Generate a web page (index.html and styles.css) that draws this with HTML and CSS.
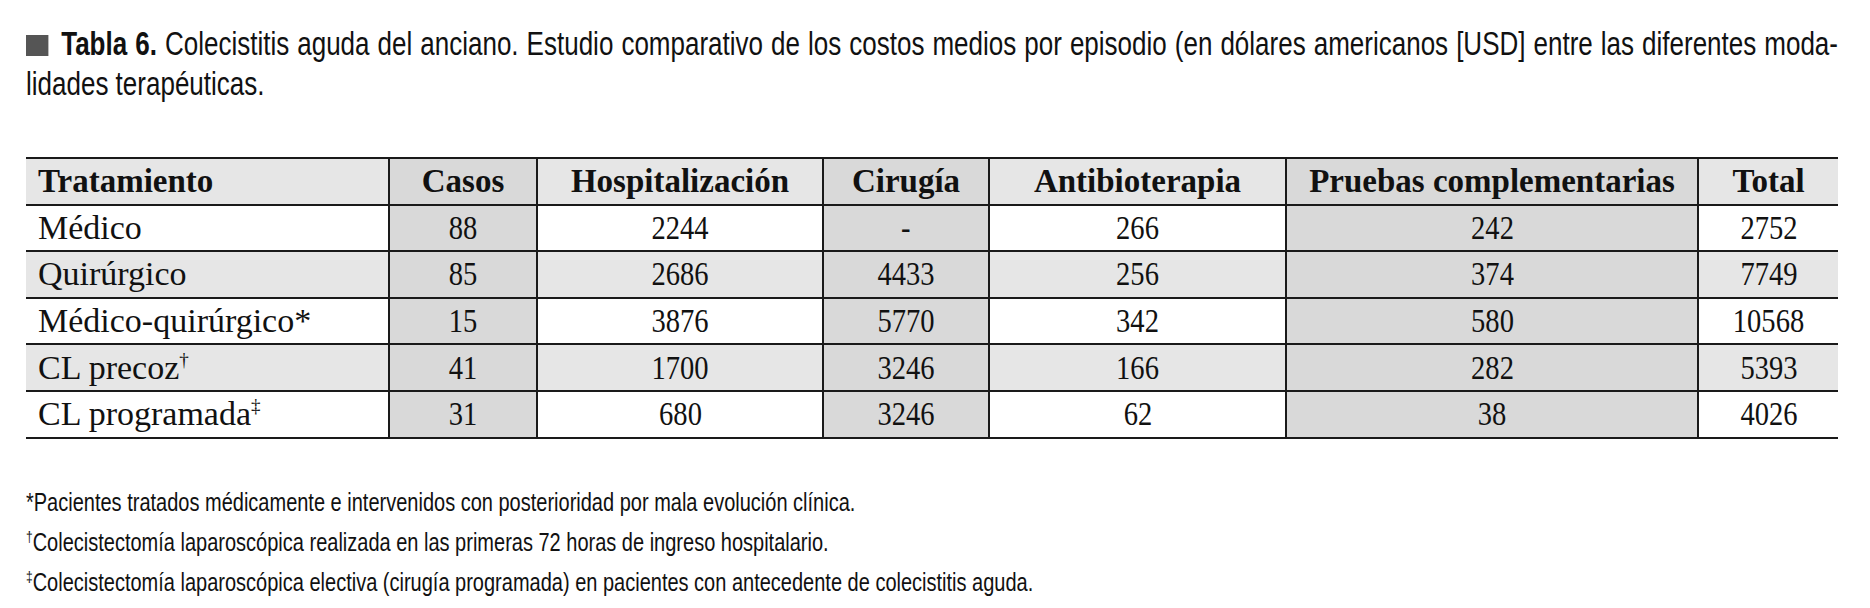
FILE: index.html
```html
<!DOCTYPE html>
<html lang="es">
<head>
<meta charset="utf-8">
<title>Tabla 6</title>
<link rel="stylesheet" href="styles.css">
</head>
<body>
<div class="page">
  <div class="caption">
    <span class="line1"><span class="sq"></span><b>Tabla 6.</b> Colecistitis aguda del anciano. Estudio comparativo de los costos medios por episodio (en dólares americanos [USD] entre las diferentes moda-</span>
    <span class="line2">lidades terapéuticas.</span>
  </div>
  <table class="tbl">
    <colgroup>
      <col class="c1"><col class="c2"><col class="c3"><col class="c4"><col class="c5"><col class="c6"><col class="c7">
    </colgroup>
    <thead>
      <tr class="shade">
        <th class="left">Tratamiento</th>
        <th class="dk">Casos</th>
        <th>Hospitalización</th>
        <th class="dk">Cirugía</th>
        <th>Antibioterapia</th>
        <th class="dk">Pruebas complementarias</th>
        <th>Total</th>
      </tr>
    </thead>
    <tbody>
      <tr>
        <td class="left">Médico</td><td class="dk"><span class="n">88</span></td><td><span class="n">2244</span></td><td class="dk"><span class="n">-</span></td><td><span class="n">266</span></td><td class="dk"><span class="n">242</span></td><td><span class="n">2752</span></td>
      </tr>
      <tr class="shade">
        <td class="left">Quirúrgico</td><td class="dk"><span class="n">85</span></td><td><span class="n">2686</span></td><td class="dk"><span class="n">4433</span></td><td><span class="n">256</span></td><td class="dk"><span class="n">374</span></td><td><span class="n">7749</span></td>
      </tr>
      <tr>
        <td class="left">Médico-quirúrgico*</td><td class="dk"><span class="n">15</span></td><td><span class="n">3876</span></td><td class="dk"><span class="n">5770</span></td><td><span class="n">342</span></td><td class="dk"><span class="n">580</span></td><td><span class="n">10568</span></td>
      </tr>
      <tr class="shade">
        <td class="left">CL precoz<sup>†</sup></td><td class="dk"><span class="n">41</span></td><td><span class="n">1700</span></td><td class="dk"><span class="n">3246</span></td><td><span class="n">166</span></td><td class="dk"><span class="n">282</span></td><td><span class="n">5393</span></td>
      </tr>
      <tr>
        <td class="left">CL programada<sup>‡</sup></td><td class="dk"><span class="n">31</span></td><td><span class="n">680</span></td><td class="dk"><span class="n">3246</span></td><td><span class="n">62</span></td><td class="dk"><span class="n">38</span></td><td><span class="n">4026</span></td>
      </tr>
    </tbody>
  </table>
  <div class="notes">
    <p>*Pacientes tratados médicamente e intervenidos con posterioridad por mala evolución clínica.</p>
    <p><sup>†</sup>Colecistectomía laparoscópica realizada en las primeras 72 horas de ingreso hospitalario.</p>
    <p><sup>‡</sup>Colecistectomía laparoscópica electiva (cirugía programada) en pacientes con antecedente de colecistitis aguda.</p>
  </div>
</div>
</body>
</html>
```
FILE: styles.css
```css
html, body {
  margin: 0;
  padding: 0;
  background: #fff;
  overflow: hidden;
}
.page {
  width: 1812px;
  padding: 24px 32px 0 26px;
  color: #111;
}
.caption {
  font-family: "Liberation Sans", Arial, sans-serif;
  font-size: 32.5px;
  line-height: 40px;
}
.caption .line1,
.caption .line2 {
  display: block;
  width: 2265px;
  transform: scaleX(0.8);
  transform-origin: 0 0;
  white-space: nowrap;
}
.caption .line1 {
  text-align: justify;
  text-align-last: justify;
}
.caption b {
  font-weight: bold;
}
.sq {
  display: inline-block;
  width: 28px;
  height: 21px;
  background: #555;
  margin-right: 16px;
  vertical-align: -1px;
}
.tbl {
  margin-top: 53px;
  width: 1812px;
  border-collapse: collapse;
  table-layout: fixed;
  font-family: "Liberation Serif", serif;
  font-size: 34px;
  color: #111;
}
.c1 { width: 363px; }
.c2 { width: 148px; }
.c3 { width: 286px; }
.c4 { width: 166px; }
.c5 { width: 297px; }
.c6 { width: 412px; }
.c7 { width: 140px; }
.tbl th, .tbl td {
  height: 44.6px;
  padding: 0;
  text-align: center;
  border-top: 2px solid #1a1a1a;
  border-bottom: 2px solid #1a1a1a;
  border-left: 2px solid #1a1a1a;
  vertical-align: middle;
  line-height: 1;
  white-space: nowrap;
}
.tbl th:first-child, .tbl td:first-child {
  border-left: none;
}
.tbl th {
  font-weight: bold;
  font-size: 33px;
}
.tbl .left {
  text-align: left;
  padding-left: 12px;
}
.tbl .shade th, .tbl .shade td {
  background: #e6e6e6;
}
.tbl .dk, .tbl .shade .dk {
  background: #d9d9d9;
}
.tbl .n {
  display: inline-block;
  transform: scaleX(0.84);
}
.tbl sup {
  font-size: 19px;
  vertical-align: 13px;
  line-height: 0;
}
.notes {
  margin-top: 43px;
  width: 2265px;
  transform: scaleX(0.8);
  transform-origin: 0 0;
  font-family: "Liberation Sans", Arial, sans-serif;
  font-size: 25px;
}
.notes p {
  margin: 0;
  line-height: 40px;
  white-space: nowrap;
}
.notes sup {
  font-size: 15px;
  vertical-align: 9px;
  line-height: 0;
}
```
